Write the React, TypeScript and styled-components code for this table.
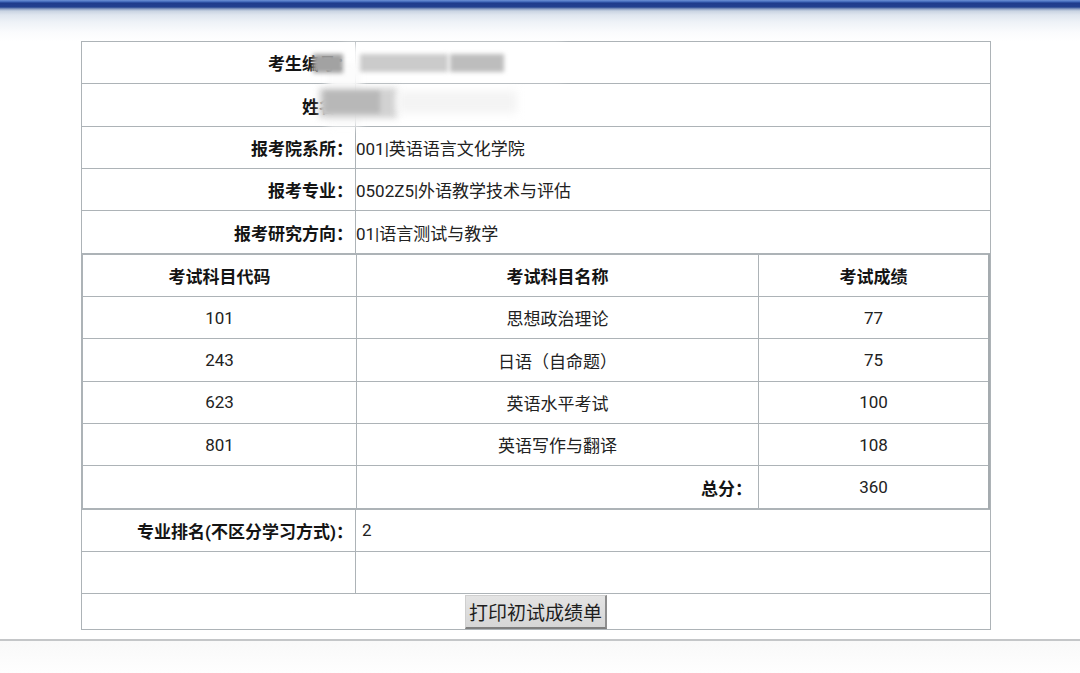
import React from "react";
import styled, { createGlobalStyle } from "styled-components";

const GlobalStyle = createGlobalStyle`
  html, body {
    margin: 0;
    padding: 0;
    background: #ffffff;
    font-family: Roboto, "Noto Sans CJK SC", "Noto Sans", sans-serif;
    color: #222;
  }
`;

const Page = styled.div`
  width: 1080px;
  height: 673px;
  overflow: hidden;
  display: flex;
  flex-direction: column;
  background: #fff;
`;

const TopBar = styled.div`
  height: 41px;
  flex: none;
  background: linear-gradient(
    to bottom,
    #6d93d6 0px,
    #3a62b4 2px,
    #1f3c8c 3px,
    #22418f 7px,
    #8fa3c4 9px,
    #c9d4e2 11px,
    #dfe6ef 15px,
    #eef2f7 22px,
    #fafbfd 32px,
    #ffffff 41px
  );
`;

const Main = styled.div`
  flex: none;
  padding-left: 81px;
`;

const Frame = styled.div`
  position: relative;
  width: 910px;
`;

const Grid = styled.table`
  width: 910px;
  border-collapse: collapse;
  table-layout: fixed;
  border: 1px solid #adb3b7;
  background: #fff;
`;

const Row = styled.tr<{ $h?: number }>`
  height: ${(p) => p.$h ?? 42.35}px;
`;

const Label = styled.td`
  border: 1px solid #adb3b7;
  text-align: right;
  padding: 0 2px 0 0;
  font-size: 17px;
  font-weight: 700;
  color: #141414;
  white-space: nowrap;
`;

const Value = styled.td<{ $pad?: number }>`
  border: 1px solid #adb3b7;
  text-align: left;
  padding: 0 0 0 ${(p) => p.$pad ?? 0}px;
  font-size: 17px;
  color: #222;
  white-space: nowrap;
`;

const SpanCell = styled.td`
  border: 1px solid #adb3b7;
  padding: 0;
`;

const ScoreTable = styled.table`
  width: 100%;
  border-collapse: collapse;
  table-layout: fixed;
  border-right: 2px solid #a5abaf;
`;

const Head = styled.th`
  border: 1px solid #adb3b7;
  font-size: 17px;
  font-weight: 700;
  color: #141414;
  text-align: center;
  padding: 0;
`;

const Cell = styled.td<{ $align?: string; $bold?: boolean }>`
  border: 1px solid #adb3b7;
  font-size: 17px;
  font-weight: ${(p) => (p.$bold ? 700 : 400)};
  color: ${(p) => (p.$bold ? "#141414" : "#222")};
  text-align: ${(p) => p.$align ?? "center"};
  padding: ${(p) => (p.$align === "right" ? "0 6px 0 0" : "0")};
`;

const ButtonCell = styled.td`
  border: 1px solid #adb3b7;
  text-align: center;
  padding: 0;
  vertical-align: top;
`;

const PrintButton = styled.button`
  display: inline-block;
  width: 142px;
  height: 34px;
  margin-top: 1px;
  padding: 0;
  font-family: "Noto Sans CJK SC", sans-serif;
  font-size: 19px;
  color: #1e1e1e;
  background: linear-gradient(to bottom, #e4e4e4, #d6d6d6);
  border: 1px solid #cfcfcf;
  border-right: 2px solid #8e8e8e;
  border-bottom: 2px solid #7f7f7f;
  cursor: pointer;
`;

const Blob = styled.div<{ $c: string; $b: number }>`
  position: absolute;
  background: ${(p) => p.$c};
  filter: blur(${(p) => p.$b}px);
  pointer-events: none;
`;

const Footer = styled.div`
  flex: 1;
  margin-top: 9px;
  border-top: 2px solid #c4c6c8;
  background: linear-gradient(to bottom, #f9f9f9, #fefefe);
`;

const blobs = [
  { l: 262, t: 4, w: 220, h: 34, c: "rgba(255,255,255,0.85)", b: 5 },
  { l: 246, t: 22, w: 34, h: 64, c: "rgba(252,252,252,0.95)", b: 4 },
  { l: 232, t: 13, w: 30, h: 19, c: "#a2a2a2", b: 2 },
  { l: 279, t: 13, w: 88, h: 18, c: "#cbcbcb", b: 2 },
  { l: 369, t: 13, w: 54, h: 18, c: "#bdbdbd", b: 2 },
  { l: 238, t: 47, w: 78, h: 30, c: "#d2d2d2", b: 3 },
  { l: 243, t: 50, w: 56, h: 22, c: "#b8b8b8", b: 2 },
  { l: 316, t: 50, w: 120, h: 22, c: "#f4f4f4", b: 4 },
];

export default function App() {
  const subjects = [
    ["101", "思想政治理论", "77"],
    ["243", "日语（自命题）", "75"],
    ["623", "英语水平考试", "100"],
    ["801", "英语写作与翻译", "108"],
  ];
  return (
    <Page>
      <GlobalStyle />
      <TopBar />
      <Main>
        <Frame>
          <Grid>
            <colgroup>
              <col style={{ width: 274 }} />
              <col />
            </colgroup>
            <tbody>
              <Row>
                <Label>考生编号：</Label>
                <Value></Value>
              </Row>
              <Row>
                <Label>姓名：</Label>
                <Value></Value>
              </Row>
              <Row>
                <Label>报考院系所：</Label>
                <Value>001|英语语言文化学院</Value>
              </Row>
              <Row>
                <Label>报考专业：</Label>
                <Value>0502Z5|外语教学技术与评估</Value>
              </Row>
              <Row>
                <Label>报考研究方向：</Label>
                <Value>01|语言测试与教学</Value>
              </Row>
              <tr>
                <SpanCell colSpan={2}>
                  <ScoreTable>
                    <colgroup>
                      <col style={{ width: 274 }} />
                      <col style={{ width: 402 }} />
                      <col />
                    </colgroup>
                    <tbody>
                      <Row>
                        <Head>考试科目代码</Head>
                        <Head>考试科目名称</Head>
                        <Head>考试成绩</Head>
                      </Row>
                      {subjects.map(([code, name, score]) => (
                        <Row key={code}>
                          <Cell>{code}</Cell>
                          <Cell>{name}</Cell>
                          <Cell>{score}</Cell>
                        </Row>
                      ))}
                      <Row>
                        <Cell></Cell>
                        <Cell $align="right" $bold>
                          总分：
                        </Cell>
                        <Cell>360</Cell>
                      </Row>
                    </tbody>
                  </ScoreTable>
                </SpanCell>
              </tr>
              <Row>
                <Label>专业排名(不区分学习方式)：</Label>
                <Value $pad={6}>2</Value>
              </Row>
              <Row>
                <Label></Label>
                <Value></Value>
              </Row>
              <Row $h={35}>
                <ButtonCell colSpan={2}>
                  <PrintButton type="button">打印初试成绩单</PrintButton>
                </ButtonCell>
              </Row>
            </tbody>
          </Grid>
          {blobs.map((b, i) => (
            <Blob
              key={i}
              $c={b.c}
              $b={b.b}
              style={{ left: b.l, top: b.t, width: b.w, height: b.h }}
            />
          ))}
        </Frame>
      </Main>
      <Footer />
    </Page>
  );
}
